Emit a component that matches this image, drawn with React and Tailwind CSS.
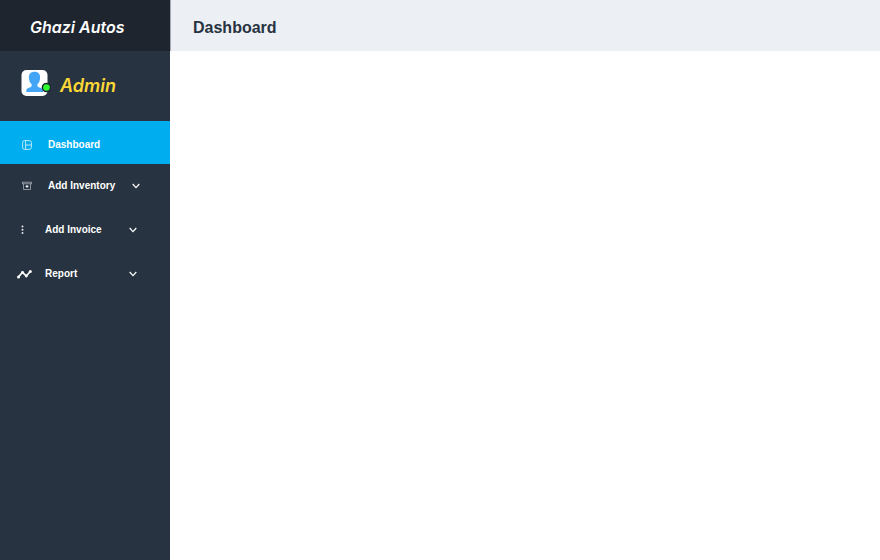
import React from "react";

function PanelIcon() {
  return (
    <svg width="10" height="10" viewBox="0 0 10 10" fill="none" stroke="#ffffff" strokeWidth="0.9" opacity="0.8" aria-hidden="true">
      <rect x="0.6" y="0.6" width="8.8" height="8.8" rx="2" />
      <path d="M3.6 .6v8.8M3.6 5h5.8" />
    </svg>
  );
}

function ArchiveIcon() {
  return (
    <svg width="10" height="10" viewBox="0 0 10 10" fill="none" stroke="#a3aab3" strokeWidth="0.8" aria-hidden="true">
      <rect x="0.5" y="1.2" width="9" height="1.6" />
      <path d="M1.5 2.8v5.7h7V2.8" />
      <path d="M5 4v2.8M3.6 5.4h2.8" stroke="#ffffff" strokeWidth="1" />
    </svg>
  );
}

function DotsIcon() {
  return (
    <svg width="5" height="10" viewBox="0 0 5 10" fill="#e5e7ea" aria-hidden="true">
      <circle cx="2.5" cy="1.5" r="1" />
      <circle cx="2.5" cy="4.8" r="1" />
      <circle cx="2.5" cy="8" r="1" />
    </svg>
  );
}

function TrendIcon() {
  return (
    <svg width="16" height="10" viewBox="0 0 16 10" fill="none" stroke="#ffffff" strokeWidth="1.7" aria-hidden="true">
      <path d="M2.5 8 6.5 3.3 10.3 7 14.3 2.5" />
      <g fill="#ffffff" stroke="none">
        <circle cx="2.5" cy="8" r="1.5" />
        <circle cx="6.5" cy="3.3" r="1.4" />
        <circle cx="10.3" cy="7" r="1.4" />
        <circle cx="14.3" cy="2.5" r="1.5" />
      </g>
    </svg>
  );
}

function Chevron() {
  return (
    <svg width="8" height="6" viewBox="0 0 8 6" fill="none" stroke="#ffffff" strokeWidth="1.2" aria-hidden="true">
      <path d="M.7 1 4 4.6 7.3 1" />
    </svg>
  );
}

function Avatar() {
  return (
    <svg width="30" height="28" viewBox="0 0 30 28" role="img" aria-label="Admin, online">
      <rect x="0.5" y="1" width="26" height="26" rx="5" fill="#ffffff" />
      <path
        d="M13.5 2.8c3.6 0 5.6 2.1 5.6 5.6 0 2.5-.8 5-2.4 6.6-.5.6-.4 1.9.1 2.5.8 1 2.9 1.3 4 2.1 1 .7 1.3 1.7 1.3 3.4H5.2c0-1.7.3-2.7 1.3-3.4 1.1-.8 3-1.1 3.8-2.1.5-.6.6-1.9.1-2.5C8.8 13.4 7.9 10.9 7.9 8.4c0-3.5 2-5.6 5.6-5.6z"
        fill="#42a5f5"
      />
      <circle cx="25.5" cy="18.5" r="4.8" fill="#1e252e" />
      <circle cx="25.5" cy="18.5" r="3.3" fill="#2fff2f" />
    </svg>
  );
}

function MenuButton({ icon, label, wide }) {
  return (
    <button
      type="button"
      aria-expanded="false"
      className={wide ? "flex h-11 w-full items-center pl-[22px] text-left" : "flex h-11 w-full items-center pl-4 text-left"}
    >
      <span className={wide ? "w-[26px]" : "flex w-[29px]"}>{icon}</span>
      <span className={wide ? "w-[84px]" : "w-[84px]"}>{label}</span>
      <Chevron />
    </button>
  );
}

export default function App() {
  return (
    <div className="flex min-h-screen bg-white font-['Liberation_Sans',Arial,sans-serif]">
      <aside className="w-[170px] shrink-0 bg-[#283341] text-white">
        <div className="flex h-[51px] items-center bg-[#1e252e] pt-0.5 pl-[30px] font-['Inter',sans-serif] text-base font-semibold italic">
          Ghazi Autos
        </div>
        <div className="flex h-[70px] items-center gap-[9px] pl-[21px] font-['Inter',sans-serif] text-lg font-semibold text-[#fdd835] italic">
          <div className="pb-1.5">
            <Avatar />
          </div>
          <span>Admin</span>
        </div>
        <nav className="text-[10px] leading-4 font-bold">
          <a href="#dashboard" aria-current="page" className="flex h-[43px] items-center gap-4 bg-[#00adef] pt-1 pl-[22px]">
            <PanelIcon />
            Dashboard
          </a>
          <MenuButton wide icon={<ArchiveIcon />} label="Add Inventory" />
          <MenuButton icon={<span className="pl-1"><DotsIcon /></span>} label="Add Invoice" />
          <MenuButton icon={<TrendIcon />} label="Report" />
        </nav>
      </aside>
      <main className="min-w-0 grow">
        <header className="flex h-[51px] items-center border-l border-[#a5abb3] bg-[#eceff4] pt-1 pl-[22px]">
          <h1 className="text-base font-bold text-[#283341]">Dashboard</h1>
        </header>
      </main>
    </div>
  );
}
